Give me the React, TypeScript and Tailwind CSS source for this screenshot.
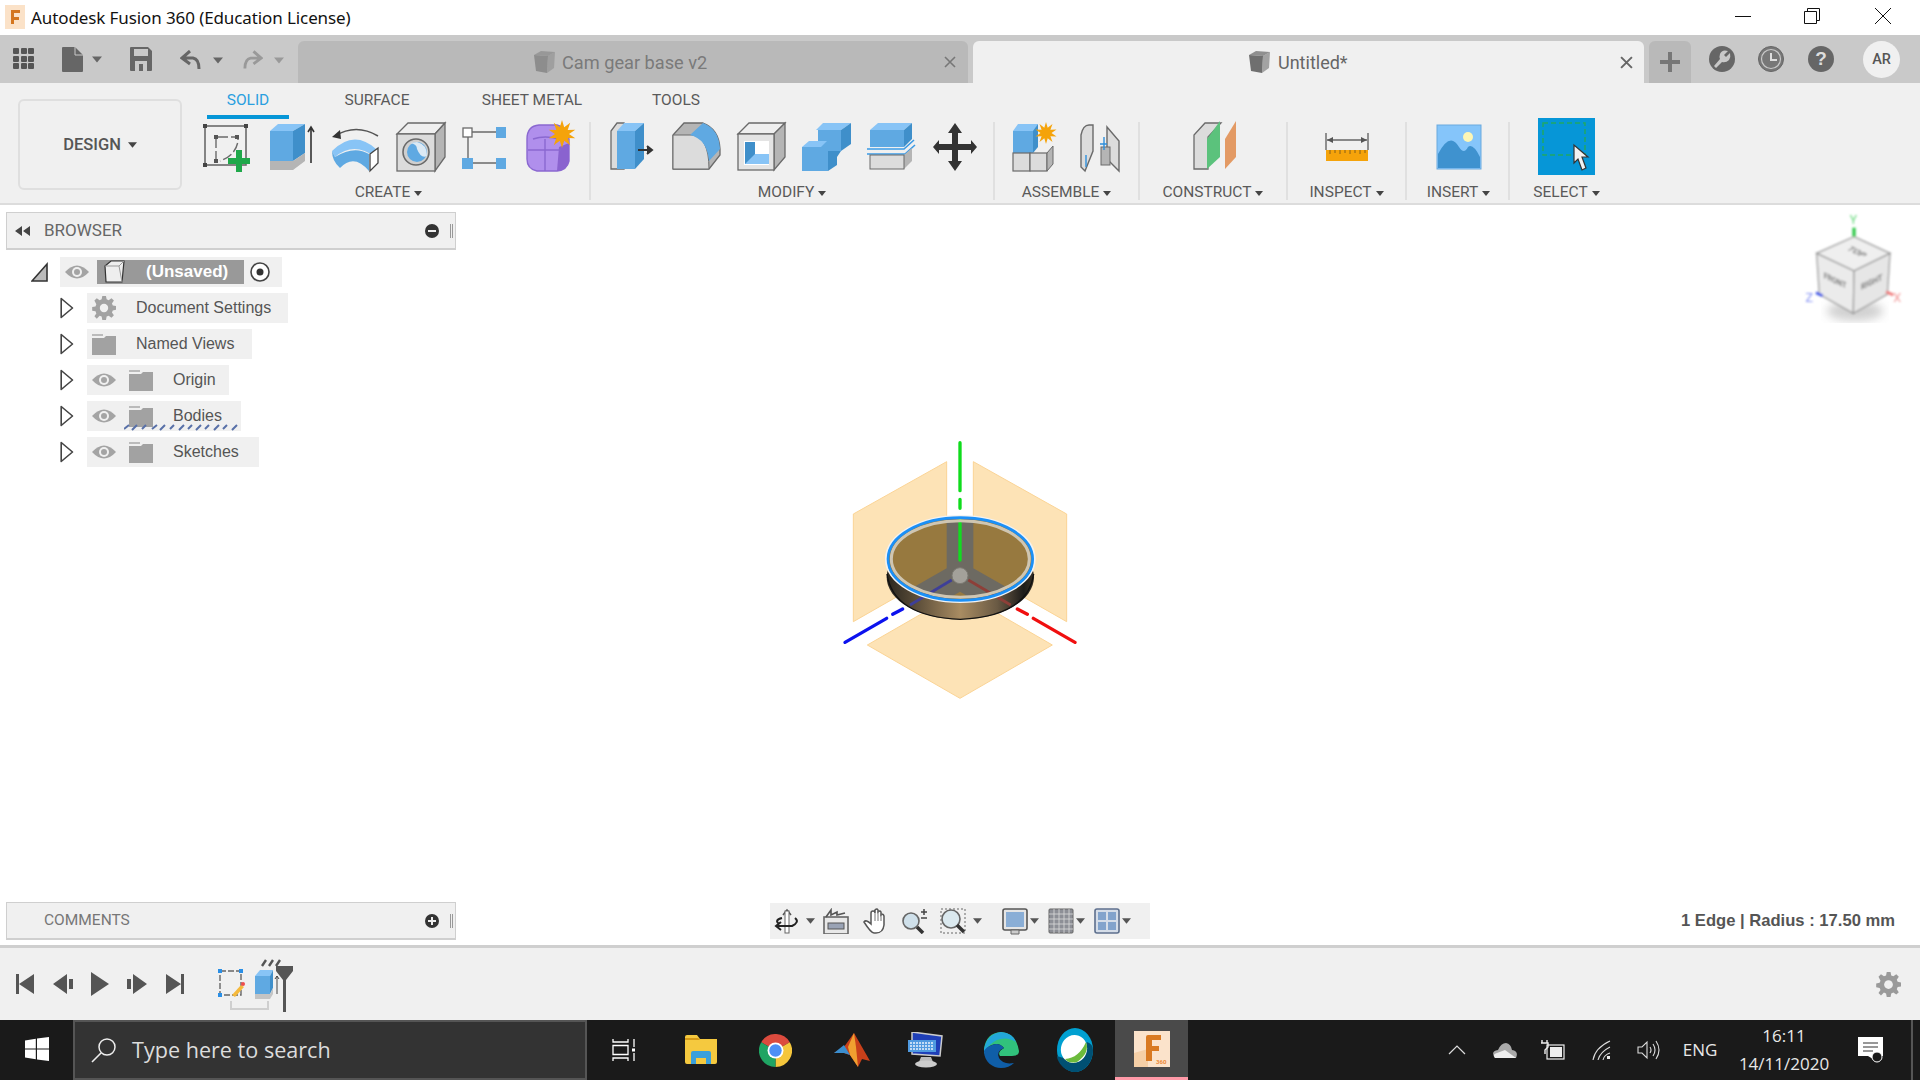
import React from "react";

const BL = "#5fa9e2";
const BD = "#3f8fca";
const BT = "#88c4f6";
const GY = "#dcdcdc";
const GD = "#b5b5b5";
const OL = "#6a6a6a";

function Caret({ c = "#555", w = 9, h = 6 }: { c?: string; w?: number; h?: number }) {
  return (
    <svg width={w} height={h} viewBox="0 0 10 6" className="shrink-0">
      <path d="M0 0H10L5 6Z" fill={c} />
    </svg>
  );
}

function I60({ children }: { children: React.ReactNode }) {
  return (
    <svg width={60} height={60} viewBox="0 0 60 60" className="shrink-0">
      {children}
    </svg>
  );
}

function Star({ x, y, r = 10 }: { x: number; y: number; r?: number }) {
  const pts: string[] = [];
  for (let i = 0; i < 20; i++) {
    const a = (i * Math.PI) / 10;
    const q = i % 2 === 0 ? r : r * 0.5;
    pts.push(`${(x + q * Math.sin(a)).toFixed(1)},${(y - q * Math.cos(a)).toFixed(1)}`);
  }
  return <polygon points={pts.join(" ")} fill="#f5a30a" />;
}

const IconSketch = () => (
  <I60>
    <rect x="9" y="9" width="41" height="39" fill="none" stroke={OL} strokeWidth="1.6" />
    {[[9, 9], [50, 9], [9, 48]].map(([x, y], i) => (
      <rect key={i} x={x - 2} y={y - 2} width="4" height="4" fill="#444" />
    ))}
    <path d="M20 44V20H42V24Q40 38 24 44" fill="none" stroke={OL} strokeWidth="1.4" strokeDasharray="10 3" />
    <rect x="18" y="18" width="4" height="4" fill="#555" />
    <rect x="18" y="42" width="4" height="4" fill="#555" />
    <rect x="39" y="18" width="4" height="4" fill="#555" />
    <path d="M40 33h6v8h8v6h-8v8h-6v-8h-8v-6h8z" fill="#1fa84a" />
  </I60>
);
const IconExtrude = () => (
  <I60>
    <polygon points="9,14 17,7 44,7 32,14" fill={BT} />
    <polygon points="9,14 32,14 32,44 9,44" fill={BL} />
    <polygon points="32,14 44,7 44,36 32,44" fill={BD} />
    <polygon points="9,44 32,44 44,36 44,44 32,53 9,53" fill={GD} />
    <path d="M50 46V11M47 15l3-5 3 5" stroke="#333" strokeWidth="1.6" fill="none" />
  </I60>
);
const IconRevolve = () => (
  <I60>
    <path d="M9 19Q30 6 52 19" fill="none" stroke="#555" strokeWidth="1.6" />
    <polygon points="6,20 14,13 15,22" fill="#333" />
    <path d="M6 34Q28 12 50 32L49 40Q28 24 9 40Z" fill={BT} />
    <path d="M6 34L9 40Q28 28 43 37V54Q28 36 14 51Q6 44 6 34Z" fill={BL} />
    <polygon points="44,37 52,31 52,46 44,54" fill="#fff" stroke="#444" strokeWidth="1.3" />
  </I60>
);
const IconHole = () => (
  <I60>
    <polygon points="6,17 17,6 54,6 44,17" fill="#efefef" stroke={OL} strokeWidth="1.3" />
    <polygon points="44,17 54,6 54,40 44,54" fill={GD} stroke={OL} strokeWidth="1.3" />
    <rect x="6" y="17" width="38" height="37" fill={GY} stroke={OL} strokeWidth="1.3" />
    <circle cx="25" cy="35" r="13" fill="#cfcfcf" stroke={OL} strokeWidth="1.6" />
    <circle cx="26" cy="35" r="10" fill={BL} />
    <path d="M19 26Q26 27 26 32Q30 42 36 39Q36 27 26 25Z" fill="#dbe9f4" />
  </I60>
);
const IconPattern = () => (
  <I60>
    <rect x="7" y="11" width="9" height="9" fill="#fff" stroke={OL} strokeWidth="1.3" />
    <rect x="40" y="10" width="10" height="11" fill={BL} />
    <rect x="6" y="41" width="11" height="11" fill={BL} />
    <rect x="40" y="41" width="10" height="11" fill={BL} />
    <path d="M16 15H40M12 20V41M17 46H40" stroke={OL} strokeWidth="1.4" />
  </I60>
);
const IconForm = () => (
  <I60>
    <path d="M6 22Q6 9 18 8H36Q46 10 48 22V44Q46 53 36 54H16Q6 52 6 42Z" fill="#b08fec" stroke="#8a68d0" strokeWidth="1.4" />
    <path d="M38 30L48 26V44Q46 53 36 54Z" fill="#8a63cf" />
    <path d="M7 33H40M24 22V54M12 22Q24 18 38 22" stroke="#8a68d0" strokeWidth="1.4" fill="none" />
    <Star x={41} y={17} r={14} />
  </I60>
);
const IconPress = () => (
  <I60>
    <polygon points="9,52 9,14 15,6 22,6 22,52" fill={GY} stroke={OL} strokeWidth="1.3" />
    <polygon points="15,14 22,6 42,6 33,14" fill={BT} />
    <rect x="15" y="14" width="18" height="38" fill={BL} />
    <polygon points="33,14 42,6 42,42 33,52" fill={BD} />
    <path d="M36 33H48M45 29l5 4-5 4" stroke="#333" strokeWidth="2" fill="#333" />
  </I60>
);
const IconFillet = () => (
  <I60>
    <path d="M6 52V18L17 6H36Q52 12 53 32V38L42 52Z" fill={GD} stroke={OL} strokeWidth="1.3" />
    <path d="M6 18H25Q42 20 42 52H6Z" fill={GY} stroke={OL} strokeWidth="1" />
    <path d="M23 18L36 6Q52 12 53 32L42 44Q40 22 23 18Z" fill={BL} />
  </I60>
);
const IconShell = () => (
  <I60>
    <polygon points="6,17 17,6 53,6 42,17" fill="#efefef" stroke={OL} strokeWidth="1.3" />
    <polygon points="42,17 53,6 53,40 42,53" fill={GD} stroke={OL} strokeWidth="1.3" />
    <rect x="6" y="17" width="36" height="36" fill="#e4e4e4" stroke={OL} strokeWidth="1.3" />
    <rect x="12" y="24" width="25" height="24" fill="#fff" />
    <rect x="13" y="25" width="10" height="22" fill={BD} />
    <polygon points="13,47 23,37 37,37 37,47" fill={BT} />
  </I60>
);
const IconCombine = () => (
  <I60>
    <polygon points="19,13 26,6 54,6 44,13" fill={BT} />
    <rect x="21" y="13" width="23" height="21" fill={BL} />
    <polygon points="44,13 54,6 54,27 44,34" fill={BD} />
    <polygon points="5,30 12,24 30,24 24,30" fill={BT} />
    <rect x="5" y="30" width="26" height="24" fill={BL} />
    <polygon points="31,34 44,34 40,40 40,48 31,54" fill={BD} />
  </I60>
);
const IconSplit = () => (
  <I60>
    <polygon points="8,13 16,6 50,6 42,13" fill={BT} />
    <rect x="8" y="13" width="34" height="17" fill={BL} />
    <polygon points="42,13 50,6 50,22 42,30" fill={BD} />
    <path d="M5 32H42L52 23M5 37H43L53 28" stroke="#3a9ae6" strokeWidth="1.6" fill="none" />
    <polygon points="8,38 42,38 50,31 50,44 42,52 8,52" fill={GD} />
    <rect x="8" y="38" width="34" height="14" fill={GY} stroke={OL} strokeWidth="1" />
  </I60>
);
const IconMove = () => (
  <I60>
    <path d="M28 6L35 16H31V27H44V23L50 30L44 37V33H31V44H35L28 54L21 44H25V33H12V37L6 30L12 23V27H25V16H21Z" fill="#333" />
  </I60>
);
const IconNewComp = () => (
  <I60>
    <polygon points="9,14 14,7 34,7 30,14" fill={BT} />
    <rect x="9" y="14" width="20" height="22" fill={BL} />
    <polygon points="29,14 34,7 34,30 29,36" fill={BD} />
    <rect x="9" y="36" width="17" height="18" fill={GY} stroke={OL} strokeWidth="1.2" />
    <rect x="26" y="36" width="17" height="18" fill={GY} stroke={OL} strokeWidth="1.2" />
    <polygon points="43,36 49,29 49,47 43,54" fill={GD} stroke={OL} strokeWidth="1" />
    <Star x={42} y={16} r={11} />
  </I60>
);
const IconJoint = () => (
  <I60>
    <path d="M12 50V18Q14 8 20 8H24V34L16 54Z" fill={GY} stroke={OL} strokeWidth="1.4" />
    <path d="M38 10L50 24V54L38 42Z" fill={GY} stroke={OL} strokeWidth="1.4" />
    <rect x="32" y="30" width="9" height="18" fill={GD} stroke={OL} />
    <path d="M35 20V33M31 27H38M17 38V50" stroke="#2e8fdc" strokeWidth="1.4" />
  </I60>
);
const IconConstruct = () => (
  <I60>
    <polygon points="11,52 11,18 22,6 38,6 25,20 25,52" fill={GY} stroke={OL} strokeWidth="1.3" />
    <polygon points="24,22 37,4 37,40 24,52" fill="#5bc27c" />
    <polygon points="42,22 53,4 53,40 42,52" fill="#e39a64" />
  </I60>
);
const IconInspect = () => (
  <I60>
    <path d="M9 16V33M51 16V33M10 23H50" stroke="#666" strokeWidth="1.4" />
    <path d="M10 23l6-3v6zM50 23l-6-3v6z" fill="#555" />
    <rect x="9" y="33" width="42" height="11" fill="#f5a30a" />
    <path d="M13 33v4M18 33v3M23 33v4M28 33v3M33 33v4M38 33v3M43 33v4M48 33v3" stroke="#876018" strokeWidth="1" />
  </I60>
);
const IconInsert = () => (
  <I60>
    <rect x="8" y="8" width="44" height="44" fill="#85c5fa" stroke="#6aa9de" />
    <circle cx="39" cy="20" r="5" fill="#fdf6b5" />
    <path d="M9 51V37Q21 14 30 30Q35 38 39 30Q44 26 51 40V51Z" fill="#3f92cf" />
  </I60>
);
const IconSelect = () => (
  <div className="relative w-[57px] h-[57px] bg-[#0696d7] shrink-0">
    <svg width={57} height={57} viewBox="0 0 57 57" className="absolute left-0 top-0">
      <rect x="5" y="5" width="42" height="32" fill="none" stroke="#21a866" strokeWidth="1.5" strokeDasharray="5 3" />
      <path d="M36 27L36 45L40 41L44 52L48 50L44 39H50Z" fill="#f2f2f2" stroke="#333" strokeWidth="1.2" />
    </svg>
  </div>
);

function Group({ w, label, children, pr = 0, pl = 0, last = false }: { w: string; label: string; children: React.ReactNode; pr?: number; pl?: number; last?: boolean }) {
  return (
    <div className={`${w} ${last ? "" : "border-r-2 border-[#e0e0e0]"} h-[78px] mt-[6px] flex flex-col items-center shrink-0`} style={{ paddingRight: pr, paddingLeft: pl }}>
      <div className="flex items-center h-[57px] -mt-[4px] justify-center">{children}</div>
      <div className="flex items-center gap-[4px] mt-[8px] h-[20px] text-[15.5px] text-[#5a5a5a]">
        <span>{label}</span>
        <Caret c="#444" w={8} h={5} />
      </div>
    </div>
  );
}

const Cell = ({ children }: { children: React.ReactNode }) => (
  <div className="w-[65px] flex justify-center shrink-0">{children}</div>
);

const Cube = ({ c = "#888" }: { c?: string }) => (
  <svg width={24} height={24} viewBox="0 0 24 24" className="shrink-0">
    <polygon points="2,5 9,1 23,2 16,6" fill={c} opacity=".75" />
    <polygon points="2,5 16,6 15,23 4,21" fill={c} />
    <polygon points="16,6 23,2 22,18 15,23" fill={c} opacity=".6" />
  </svg>
);

function TitleBar() {
  return (
    <div className="h-[35px] bg-white flex items-center relative shrink-0">
      <svg width={20} height={24} viewBox="0 0 20 24" className="ml-[5px] -mt-[2px] shrink-0">
        <rect width="20" height="24" fill="#fbe2c8" />
        <path d="M6 5H15V8H9V12H14V15H9V19H6Z" fill="#d4761f" />
      </svg>
      <span className="ml-[6px] text-[17px] text-[#111] font-['Noto_Sans',sans-serif] tracking-[-0.1px]">Autodesk Fusion 360 (Education License)</span>
      <div className="ml-auto flex items-center mr-[29px] -mt-[3px]">
        <svg width={16} height={16} viewBox="0 0 16 16"><path d="M0 8.5H16" stroke="#111" /></svg>
        <svg width={16} height={16} viewBox="0 0 16 16" className="ml-[53px]">
          <path d="M.5 3.5H12.5V15.5H.5ZM3.5 3V.5H15.5V12.5H13" fill="none" stroke="#111" />
        </svg>
        <svg width={16} height={16} viewBox="0 0 16 16" className="ml-[55px]">
          <path d="M0 0L16 16M16 0L0 16" stroke="#111" />
        </svg>
      </div>
    </div>
  );
}

function TabBar() {
  return (
    <div className="h-[48px] bg-[#c9c9c9] flex items-end relative shrink-0">
      <div className="absolute left-[13px] top-[13px] grid grid-cols-3 gap-[1.5px]">
        {Array.from({ length: 9 }).map((_, i) => (
          <div key={i} className="w-[6px] h-[6px] bg-[#555] rounded-[1px]" />
        ))}
      </div>
      <div className="absolute left-[62px] top-[12px] flex items-center gap-[9px]">
        <svg width={21} height={25} viewBox="0 0 21 25"><path d="M1 0H13L21 8V24Q21 25 20 25H1Q0 25 0 24V1Q0 0 1 0Z" fill="#666" /><path d="M13 0V8H21" fill="none" stroke="#c9c9c9" /></svg>
        <Caret c="#666" w={10} h={7} />
      </div>
      <svg width={22} height={24} viewBox="0 0 22 24" className="absolute left-[130px] top-[12px]">
        <path d="M1 0H18L22 4V23Q22 24 21 24H1Q0 24 0 23V1Q0 0 1 0Z" fill="#666" />
        <rect x="4" y="2" width="14" height="7" fill="#c9c9c9" />
        <rect x="5" y="14" width="12" height="10" fill="#c9c9c9" />
        <rect x="9" y="17" width="4" height="7" fill="#666" />
      </svg>
      <div className="absolute left-[180px] top-[15px] flex items-center gap-[12px]">
        <svg width={21} height={20} viewBox="0 0 21 20"><path d="M10 1L2 8L10 14M3 8H13Q19 9 19 19" fill="none" stroke="#666" strokeWidth="3" /></svg>
        <Caret c="#666" w={10} h={7} />
      </div>
      <div className="absolute left-[243px] top-[15px] flex items-center gap-[11px]">
        <svg width={20} height={20} viewBox="0 0 21 20"><path d="M11 1L19 8L11 14M18 8H8Q2 9 2 19" fill="none" stroke="#999" strokeWidth="3" /></svg>
        <Caret c="#999" w={10} h={7} />
      </div>

      <div className="ml-[298px] w-[670px] h-[42px] bg-[#b9b9b9] rounded-t-[6px] flex items-center pl-[234px] pr-[12px] text-[#7a7a7a] text-[18.2px] font-['Roboto',sans-serif]">
        <Cube c="#8d8d8d" />
        <span className="ml-[6px] mt-[2px]">Cam gear base v2</span>
        <svg width={12} height={12} viewBox="0 0 12 12" className="ml-auto"><path d="M1 1L11 11M11 1L1 11" stroke="#777" strokeWidth="1.6" /></svg>
      </div>
      <div className="ml-[5px] w-[671px] h-[42px] bg-[#f0f0f0] rounded-t-[6px] flex items-center pl-[274px] pr-[11px] text-[#666] text-[18px] font-['Roboto',sans-serif]">
        <Cube c="#6f6f6f" />
        <span className="ml-[7px]">Untitled*</span>
        <svg width={13} height={13} viewBox="0 0 12 12" className="ml-auto"><path d="M1 1L11 11M11 1L1 11" stroke="#666" strokeWidth="1.8" /></svg>
      </div>
      <div className="ml-[5px] w-[42px] h-[42px] bg-[#b9b9b9] rounded-t-[6px] flex items-center justify-center">
        <svg width={20} height={20} viewBox="0 0 20 20"><path d="M8 0h4v8h8v4h-8v8H8v-8H0V8h8z" fill="#777" /></svg>
      </div>
      <div className="absolute left-[1709px] top-[11px]">
        <svg width={26} height={26} viewBox="0 0 26 26">
          <circle cx="13" cy="13" r="13" fill="#666" />
          <path d="M21 7L17 11L15 9L19 5Q13 3 11 8Q10 11 11 13L5 20L7 22L13 16Q17 17 20 14Q22 11 21 7Z" fill="#c9c9c9" />
        </svg>
      </div>
      <div className="absolute left-[1758px] top-[11px]">
        <svg width={26} height={26} viewBox="0 0 26 26">
          <circle cx="13" cy="13" r="12.5" fill="#777" stroke="#666" />
          <circle cx="13" cy="13" r="9.5" fill="#777" stroke="#c9c9c9" strokeWidth="1.2" />
          <path d="M13 7V14H19" fill="none" stroke="#ddd" strokeWidth="2" />
        </svg>
      </div>
      <div className="absolute left-[1808px] top-[11px] w-[26px] h-[26px] rounded-full bg-[#666] flex items-center justify-center text-[#ddd] font-bold text-[19px] font-['Liberation_Sans',sans-serif]">?</div>
      <div className="absolute left-[1863px] top-[6px] w-[37px] h-[37px] rounded-full bg-[#f0f0f0] flex items-center justify-center text-[#555] text-[14.5px] font-['Roboto',sans-serif] font-medium">AR</div>
    </div>
  );
}

function Ribbon() {
  return (
    <div className="h-[122px] bg-[#f0f0f0] border-b-2 border-[#dcdcdc] flex shrink-0 font-['Roboto',sans-serif]">
      <div className="ml-[18px] mt-[16px] w-[164px] h-[91px] border-2 border-[#dfdfdf] rounded-[6px] flex items-center justify-center gap-[7px] text-[#555] text-[16.5px] font-medium shrink-0">
        <span className="mt-[1px]">DESIGN</span>
        <Caret c="#444" />
      </div>
      <div className="flex flex-col">
        <div className="h-[32px] flex text-[15.5px] text-[#5a5a5a] shrink-0 ml-[25px]">
          <div className="w-[82px] flex flex-col items-center justify-end text-[#2a9fdf] relative">
            <span className="mb-[3px]">SOLID</span>
            <div className="absolute left-0 top-[32px] w-[82px] h-[4px] bg-[#0696d7]" />
          </div>
          <div className="ml-[38px] w-[100px] flex items-end justify-center"><span className="mb-[3px]">SURFACE</span></div>
          <div className="ml-[45px] w-[120px] flex items-end justify-center"><span className="mb-[3px]">SHEET METAL</span></div>
          <div className="ml-[54px] w-[60px] flex items-end justify-center"><span className="mb-[3px]">TOOLS</span></div>
        </div>
        <div className="flex ml-[14px] mt-[1px]">
          <Group w="w-[395px]" label="CREATE" pr={8}>
            <Cell><IconSketch /></Cell><Cell><IconExtrude /></Cell><Cell><IconRevolve /></Cell><Cell><IconHole /></Cell><Cell><IconPattern /></Cell><Cell><IconForm /></Cell>
          </Group>
          <Group w="w-[404px]" label="MODIFY">
            <div className="flex pl-[4px]"><Cell><IconPress /></Cell><Cell><IconFillet /></Cell><Cell><IconShell /></Cell><Cell><IconCombine /></Cell><Cell><IconSplit /></Cell><Cell><IconMove /></Cell></div>
          </Group>
          <Group w="w-[145px]" label="ASSEMBLE">
            <Cell><IconNewComp /></Cell><Cell><IconJoint /></Cell>
          </Group>
          <Group w="w-[148px]" label="CONSTRUCT">
            <IconConstruct />
          </Group>
          <Group w="w-[119px]" label="INSPECT">
            <IconInspect />
          </Group>
          <Group w="w-[103px]" label="INSERT" pl={2}>
            <IconInsert />
          </Group>
          <Group w="w-[112px]" label="SELECT" last pl={1}>
            <IconSelect />
          </Group>
        </div>
      </div>
    </div>
  );
}

const Eye = () => (
  <svg width={24} height={16} viewBox="0 0 24 16" className="shrink-0">
    <path d="M0 8Q12 -5 24 8Q12 21 0 8Z" fill="#a4a4a4" />
    <circle cx="12" cy="8" r="5" fill="#f0f0f0" />
    <circle cx="12" cy="8" r="3" fill="#a4a4a4" />
  </svg>
);
const Folder = () => (
  <svg width={24} height={21} viewBox="0 0 24 21" className="shrink-0">
    <path d="M0 0H11V2H0Z" fill="#bbb" />
    <path d="M0 4H12L14 2H24V21H0Z" fill="#a2a2a2" />
  </svg>
);
const Gear = ({ s = 24, c = "#a2a2a2" }: { s?: number; c?: string }) => (
  <svg width={s} height={s} viewBox="0 0 24 24" className="shrink-0">
    <path
      d="M10 0h4l.7 3.6 2.2.9L20 2.4 22.6 5l-2.1 3.1.9 2.2 3.6.7v4l-3.6.7-.9 2.2 2.1 3.1-2.6 2.6-3.1-2.1-2.2.9-.7 3.6h-4l-.7-3.6-2.2-.9L4 24.6 1.4 22l2.1-3.1-.9-2.2L-1 16v-4l3.6-.7.9-2.2L1.4 5 4 2.4l3.1 2.1 2.2-.9z"
      fill={c}
      transform="translate(1.1 0) scale(.92)"
    />
    <circle cx="12" cy="12" r="4.2" fill="#f0f0f0" />
  </svg>
);
const Tri = () => (
  <svg width={14} height={22} viewBox="0 0 14 22" className="shrink-0">
    <path d="M1.2 1.5L12.5 11L1.2 20.5Z" fill="#fff" stroke="#444" strokeWidth="1.6" strokeLinejoin="round" />
  </svg>
);

function TreeRow({ w, eye, gear, label, wavy }: { w: string; eye?: boolean; gear?: boolean; label: string; wavy?: boolean }) {
  return (
    <div className="flex items-center h-[30px] ml-[60px]">
      <Tri />
      <div className={`ml-[13px] ${w} h-[30px] bg-[#f0f0f0] flex items-center pl-[5px] relative`}>
        {eye && <Eye />}
        {gear ? <Gear /> : <div className={eye ? "ml-[13px]" : ""}><Folder /></div>}
        <span className="ml-[20px] text-[#555]">{label}</span>
        {wavy && (
          <svg width={116} height={8} viewBox="0 0 116 8" className="absolute left-[37px] top-[22px]">
            <path d="M0 6L5 2M8 7L13 2M18 6L22 2M28 6L33 2M36 7L41 2M46 6L50 2M55 7L60 2M64 6L68 2M72 7L77 2M81 6L85 2M90 7L95 2M99 6L103 2M108 7L113 2" stroke="#5870a8" strokeWidth="2" />
          </svg>
        )}
      </div>
    </div>
  );
}

function Browser() {
  return (
    <div>
      <div className="ml-[6px] w-[450px] h-[38px] bg-[#f0f0f0] border border-[#cfcfcf] border-b-2 flex items-center pl-[8px] pr-[2px]">
        <svg width={15} height={10} viewBox="0 0 15 10"><path d="M7 0V10L0 5ZM15 0V10L8 5Z" fill="#444" /></svg>
        <span className="ml-[14px] text-[#666] text-[17px] font-['Roboto',sans-serif]">BROWSER</span>
        <svg width={14} height={14} viewBox="0 0 14 14" className="ml-auto"><circle cx="7" cy="7" r="7" fill="#333" /><rect x="3" y="6" width="8" height="2" fill="#eee" /></svg>
        <div className="ml-[11px] w-[3px] h-[14px] border-x border-[#999]" />
      </div>
      <div className="mt-[7px] flex flex-col gap-[6px] text-[16px] font-['Liberation_Sans',sans-serif]">
        <div className="flex items-center h-[30px] ml-[31px]">
          <svg width={18} height={22} viewBox="0 0 18 22"><path d="M1 20L16 3V20Z" fill="#bbb" stroke="#333" strokeWidth="1.6" /></svg>
          <div className="ml-[11px] w-[222px] h-[30px] bg-[#f0f0f0] flex items-center pl-[5px]">
            <Eye />
            <div className="ml-[8px] w-[147px] h-[24px] bg-[#999] flex items-center relative">
              <svg width={24} height={24} viewBox="0 0 24 24" className="ml-[5px]">
                <path d="M3 6L9 1H22L20 22H4Z" fill="#eee" stroke="#333" strokeWidth="1.2" />
                <path d="M3 6H17L20 22M17 6L22 1" fill="none" stroke="#999" strokeWidth="1" />
              </svg>
              <span className="ml-[20px] text-white font-bold text-[17px]">(Unsaved)</span>
            </div>
            <svg width={20} height={20} viewBox="0 0 20 20" className="ml-[6px]"><circle cx="10" cy="10" r="9" fill="#fff" stroke="#444" strokeWidth="1.6" /><circle cx="10" cy="10" r="3.5" fill="#333" /></svg>
          </div>
        </div>
        <TreeRow w="w-[201px]" gear label="Document Settings" />
        <TreeRow w="w-[165px]" label="Named Views" />
        <TreeRow w="w-[142px]" eye label="Origin" />
        <TreeRow w="w-[154px]" eye label="Bodies" wavy />
        <TreeRow w="w-[172px]" eye label="Sketches" />
      </div>
    </div>
  );
}

function Model() {
  const wallL = "380,95 100,252 100,575 380,415";
  const wallR = "460,95 740,252 740,575 460,415";
  const floor = "142,645 420,805 697,645 420,485";
  return (
    <svg width={280} height={280} viewBox="0 0 840 840" className="absolute left-[820px] top-[225px]">
      <defs>
        <linearGradient id="band" x1="0" x2="1" y1="0" y2="0">
          <stop offset="0" stopColor="#2a261e" />
          <stop offset=".2" stopColor="#5b4d39" />
          <stop offset=".5" stopColor="#a98c62" />
          <stop offset=".75" stopColor="#6a5a44" />
          <stop offset=".93" stopColor="#1d1c1a" />
          <stop offset="1" stopColor="#3a3226" />
        </linearGradient>
        <clipPath id="top"><ellipse cx="421" cy="387" rx="216" ry="124" /></clipPath>
      </defs>
      <g fill="#fde3b6" stroke="#fbd495" strokeWidth="3">
        <polygon points={wallL} />
        <polygon points={wallR} />
        <polygon points={floor} />
      </g>
      <path d="M75 637L200 565M218 553L248 537" stroke="#0c12ee" strokeWidth="10" strokeLinecap="round" />
      <path d="M765 637L640 565M622 553L592 537" stroke="#f00f0f" strokeWidth="10" strokeLinecap="round" />
      <path d="M420 38V182M420 208V235" stroke="#0fdc1c" strokeWidth="10" strokeLinecap="round" />
      <ellipse cx="421" cy="442" rx="221" ry="126" fill="url(#band)" />
      <path d="M201 432Q220 560 421 568Q622 560 641 432" fill="none" stroke="#111" strokeWidth="4" />
      <ellipse cx="421" cy="387" rx="216" ry="124" fill="#6d6a62" />
      <g clipPath="url(#top)" fill="#97793f">
        <polygon points={wallL} />
        <polygon points={wallR} />
        <polygon points={floor} />
      </g>
      <path d="M270 525L395 450" stroke="#3e3f98" strokeWidth="8" />
      <path d="M572 525L445 450" stroke="#8d3f38" strokeWidth="8" />
      <path d="M420 270V390" stroke="#12dc20" strokeWidth="10" strokeLinecap="round" />
      <circle cx="420" cy="437" r="24" fill="#a3a19a" stroke="#7c7a72" strokeWidth="3" />
      <ellipse cx="421" cy="387" rx="223" ry="129" fill="none" stroke="#f2f2f2" strokeWidth="6" />
      <ellipse cx="421" cy="387" rx="207" ry="115" fill="none" stroke="#cfc6b2" strokeWidth="9" />
      <ellipse cx="421" cy="387" rx="217" ry="124" fill="none" stroke="#1a90f8" strokeWidth="8" />
    </svg>
  );
}

function ViewCube() {
  return (
    <svg width={140} height={130} viewBox="0 0 420 390" className="absolute left-[1780px] top-0">
      <defs>
        <filter id="b1"><feGaussianBlur stdDeviation="2.4" /></filter>
        <filter id="b2"><feGaussianBlur stdDeviation="14" /></filter>
      </defs>
      <ellipse cx="225" cy="318" rx="85" ry="30" fill="#999" opacity=".45" filter="url(#b2)" />
      <g filter="url(#b1)">
        <polygon points="222,95 330,145 222,198 110,145" fill="#efefef" stroke="#9c9c9c" strokeWidth="4" />
        <polygon points="110,145 222,198 220,325 118,268" fill="#ebebeb" stroke="#9c9c9c" strokeWidth="4" />
        <polygon points="330,145 222,198 220,325 322,268" fill="#e6e6e6" stroke="#9c9c9c" strokeWidth="4" />
        <path d="M222 95V68" stroke="#2fc94a" strokeWidth="10" />
        <path d="M108 263L128 272" stroke="#3c55e8" strokeWidth="8" />
        <path d="M318 260L340 270" stroke="#ef7a7a" strokeWidth="8" />
        <text x="220" y="58" textAnchor="middle" fontSize="36" fill="#64d87a" fontFamily="Roboto, sans-serif">Y</text>
        <text x="88" y="292" textAnchor="middle" fontSize="38" fill="#8a97f5" fontFamily="Roboto, sans-serif">Z</text>
        <text x="352" y="292" textAnchor="middle" fontSize="38" fill="#f29a9a" fontFamily="Roboto, sans-serif">X</text>
        <text textAnchor="middle" fontSize="30" fill="#777" fontFamily="Roboto, sans-serif" fontWeight="700" transform="matrix(.85 .42 -.85 .42 222 145)">TOP</text>
        <text textAnchor="middle" fontSize="25" fill="#777" fontFamily="Roboto, sans-serif" fontWeight="700" transform="matrix(.85 .4 0 1 165 235)">FRONT</text>
        <text textAnchor="middle" fontSize="26" fill="#777" fontFamily="Roboto, sans-serif" fontWeight="700" transform="matrix(.85 -.4 0 1 275 240)">RIGHT</text>
      </g>
    </svg>
  );
}

function NavBar() {
  const s = { fill: "none", stroke: "#555", strokeWidth: 1.6 };
  return (
    <div className="w-[380px] h-[36px] bg-[#f0f0f0] flex items-center relative shrink-0">
      <svg width={26} height={26} viewBox="0 0 26 26" className="absolute left-[4px] top-[5px]">
        <path d="M13 25V3M9 7l4-5 4 5" {...s} />
        <rect x="11" y="3" width="4" height="22" fill="#fff" stroke="#666" />
        <path d="M5 16Q0 12 8 10M21 10Q26 14 18 18H3M7 14L2 18L7 22" fill="none" stroke="#222" strokeWidth="2" />
      </svg>
      <div className="absolute left-[36px] top-[15px]"><Caret /></div>
      <svg width={26} height={26} viewBox="0 0 26 26" className="absolute left-[53px] top-[5px]">
        <rect x="1" y="9" width="24" height="17" fill="#e8e8e8" stroke="#666" strokeWidth="1.6" />
        <rect x="5" y="15" width="16" height="6" fill="#9aa3b5" stroke="#555" />
        <path d="M3 9L8 2V7L14 4V7L22 5" {...s} />
      </svg>
      <svg width={26} height={26} viewBox="0 0 26 26" className="absolute left-[93px] top-[5px]">
        <path d="M8 16V5Q8 3 10 3T12 5V2Q14 0 15 2V4Q17 2 18 4V7Q20 5 21 8V17Q20 25 13 25H11Q8 25 1 14Q3 11 8 16Z" fill="#fff" stroke="#555" strokeWidth="1.5" />
        <path d="M12 5V13M15 3V13M18 6V13" stroke="#777" />
      </svg>
      <svg width={26} height={26} viewBox="0 0 26 26" className="absolute left-[131px] top-[5px]">
        <circle cx="10" cy="13" r="8" fill="#cfe0ea" stroke="#666" strokeWidth="1.6" />
        <path d="M16 19L22 25" stroke="#333" strokeWidth="3.5" />
        <path d="M20 4H26M23 1V7M20 10H26" stroke="#444" strokeWidth="1.5" />
      </svg>
      <svg width={26} height={26} viewBox="0 0 26 26" className="absolute left-[170px] top-[5px]">
        <rect x="1" y="1" width="24" height="24" fill="none" stroke="#666" strokeDasharray="2 2" />
        <circle cx="11" cy="11" r="9" fill="#dbe9ef" stroke="#666" strokeWidth="1.6" />
        <path d="M17 17L24 24" stroke="#333" strokeWidth="3.5" />
      </svg>
      <div className="absolute left-[203px] top-[15px]"><Caret /></div>
      <svg width={26} height={30} viewBox="0 0 26 30" className="absolute left-[232px] top-[5px]">
        <rect x="1" y="1" width="24" height="21" rx="2" fill="#e5e5e5" stroke="#555" strokeWidth="1.6" />
        <rect x="4" y="4" width="18" height="15" fill="#8aaed6" />
        <path d="M9 22H17V26H9Z" fill="#ccc" stroke="#666" />
      </svg>
      <div className="absolute left-[260px] top-[15px]"><Caret /></div>
      <svg width={26} height={26} viewBox="0 0 26 26" className="absolute left-[278px] top-[5px]">
        <rect x="1" y="1" width="24" height="24" rx="1" fill="#8d8f96" stroke="#666" />
        <path d="M6 1V25M11 1V25M16 1V25M21 1V25M1 6H25M1 11H25M1 16H25M1 21H25" stroke="#dcdcdc" strokeWidth=".8" />
      </svg>
      <div className="absolute left-[306px] top-[15px]"><Caret /></div>
      <svg width={26} height={26} viewBox="0 0 26 26" className="absolute left-[324px] top-[5px]">
        <rect x="1" y="1" width="24" height="24" rx="2" fill="#d5dde8" stroke="#5d6f8d" strokeWidth="1.6" />
        <rect x="4" y="4" width="8" height="8" fill="#82a3cc" />
        <rect x="14" y="4" width="8" height="8" fill="#82a3cc" />
        <rect x="4" y="14" width="8" height="8" fill="#82a3cc" />
        <rect x="14" y="14" width="8" height="8" fill="#82a3cc" />
      </svg>
      <div className="absolute left-[352px] top-[15px]"><Caret /></div>
    </div>
  );
}

function Canvas() {
  return (
    <div className="flex-1 relative bg-white flex flex-col justify-between pt-[7px] pb-[5px] min-h-0">
      <Browser />
      <Model />
      <ViewCube />
      <div className="flex items-center">
        <div className="ml-[6px] w-[450px] h-[38px] bg-[#f0f0f0] border border-[#cfcfcf] border-b-2 flex items-center pl-[37px] pr-[2px] shrink-0">
          <span className="text-[#777] text-[15.5px] font-['Roboto',sans-serif]">COMMENTS</span>
          <svg width={14} height={14} viewBox="0 0 14 14" className="ml-auto"><circle cx="7" cy="7" r="7" fill="#333" /><path d="M3 7H11M7 3V11" stroke="#eee" strokeWidth="2" /></svg>
          <div className="ml-[11px] w-[3px] h-[14px] border-x border-[#999]" />
        </div>
        <div className="ml-[314px]"><NavBar /></div>
        <div className="ml-auto mr-[25px] text-[16.6px] font-bold text-[#555] font-['Liberation_Sans',sans-serif]">1 Edge | Radius : 17.50 mm</div>
      </div>
    </div>
  );
}

function Timeline() {
  const c = "#555";
  return (
    <div className="h-[75px] bg-[#f0f0f0] border-t-[3px] border-[#cfcfcf] flex items-center relative shrink-0">
      <svg width={18} height={20} viewBox="0 0 18 20" className="ml-[16px]"><path d="M0 0H3V20H0ZM18 0V20L3 10Z" fill={c} /></svg>
      <svg width={20} height={20} viewBox="0 0 20 20" className="ml-[19px]"><path d="M14 0V20L0 10ZM16 5H20V15H16Z" fill={c} /></svg>
      <svg width={18} height={24} viewBox="0 0 18 24" className="ml-[18px]"><path d="M0 0L18 12L0 24Z" fill={c} /></svg>
      <svg width={20} height={20} viewBox="0 0 20 20" className="ml-[18px]"><path d="M6 0V20L20 10ZM0 5H4V15H0Z" fill={c} /></svg>
      <svg width={18} height={20} viewBox="0 0 18 20" className="ml-[19px]"><path d="M15 0H18V20H15ZM0 0V20L15 10Z" fill={c} /></svg>
      <svg width={84} height={58} viewBox="0 0 84 58" className="absolute left-[215px] top-[6px]">
        <path d="M47 12L51 6M54 12L58 6M61 12L65 6" stroke="#555" strokeWidth="2.4" />
        <rect x="5" y="17" width="21" height="24" fill="none" stroke="#666" strokeDasharray="6 2" strokeWidth="1.4" />
        <rect x="3" y="15" width="4" height="4" fill="#2a8fe6" />
        <rect x="24" y="15" width="4" height="4" fill="#2a8fe6" />
        <rect x="3" y="39" width="4" height="4" fill="#2a8fe6" />
        <path d="M17 41L26 31L29 33L20 43Z" fill="#f5b93c" />
        <circle cx="28" cy="30" r="2" fill="#ee4d4d" />
        <polygon points="40,22 45,16 58,16 55,22" fill={BT} />
        <rect x="40" y="22" width="15" height="18" fill={BL} />
        <polygon points="55,22 58,16 58,34 55,40" fill={BD} />
        <path d="M40 40H55L58 34V40L55 45H40Z" fill="#c4c4c4" />
        <path d="M62 40V22M60 25l2-3 2 3" stroke="#444" fill="none" />
        <path d="M16 47V55H53V47" fill="none" stroke="#cfcfcf" strokeWidth="2" />
        <path d="M61 12H78V17L71 26V58H68V26L61 17Z" fill="#555" />
      </svg>
      <div className="ml-auto mr-[19px]"><Gear s={25} c="#9a9a9a" /></div>
    </div>
  );
}

const TaskCell = ({ x, children }: { x: string; children: React.ReactNode }) => (
  <div className={`${x} flex justify-center items-center shrink-0`}>{children}</div>
);

function Taskbar() {
  return (
    <div className="h-[60px] bg-[#1a1a1a] flex items-center relative shrink-0 font-['Open_Sans',sans-serif]">
      <div className="w-[73px] flex justify-center -mt-[2px] shrink-0">
        <svg width={24} height={24} viewBox="0 0 24 24"><path d="M0 3.4L10.8 1.8V11.4H0ZM12 1.6L24 0V11.4H12ZM0 12.6H10.8V22.2L0 20.6ZM12 12.6H24V24L12 22.4Z" fill="#fff" /></svg>
      </div>
      <div className="w-[514px] h-[60px] bg-[#333] border-x-2 border-t-2 border-b-2 border-[#555] flex items-center pl-[16px] shrink-0">
        <svg width={26} height={26} viewBox="0 0 26 26"><circle cx="16" cy="10" r="8" fill="none" stroke="#eee" strokeWidth="1.5" /><path d="M10 16L1 25" stroke="#eee" strokeWidth="1.6" /></svg>
        <span className="ml-[15px] text-[#dcdcdc] text-[21.6px]">Type here to search</span>
      </div>
      <TaskCell x="ml-[25px] w-[24px]">
        <svg width={24} height={24} viewBox="0 0 24 24"><path d="M1 1V4H16V1M1 23V20H16V23M1 7.5H16V16.5H1ZM22 1V9M22 15V23" fill="none" stroke="#fff" strokeWidth="1.3" /><rect x="20" y="10.5" width="3" height="3" fill="#fff" /></svg>
      </TaskCell>
      <TaskCell x="ml-[48px] w-[34px]">
        <svg width={34} height={30} viewBox="0 0 34 30">
          <path d="M1 2Q1 0 3 0H13L16 4H33V27Q33 29 31 29H3Q1 29 1 27Z" fill="#f5c93f" />
          <path d="M1 3H14L16 5H1Z" fill="#d69a16" />
          <path d="M7 29V18Q7 16 9 16H25Q27 16 27 18V29H22V23H12V29Z" fill="#3aa0dc" />
        </svg>
      </TaskCell>
      <TaskCell x="ml-[41px] w-[33px]">
        <svg width={33} height={33} viewBox="0 0 33 33">
          <path d="M16.5 16.5L2.2 8.25A16.5 16.5 0 0 1 30.8 8.25Z" fill="#dc4b3e" />
          <path d="M16.5 16.5L30.8 8.25A16.5 16.5 0 0 1 16.5 33Z" fill="#f5c63c" />
          <path d="M16.5 16.5L16.5 33A16.5 16.5 0 0 1 2.2 8.25Z" fill="#1fa463" />
          <circle cx="16.5" cy="16.5" r="8" fill="#fff" />
          <circle cx="16.5" cy="16.5" r="6.2" fill="#4d8ff5" />
        </svg>
      </TaskCell>
      <TaskCell x="ml-[42px] w-[36px]">
        <svg width={36} height={34} viewBox="0 0 36 34">
          <path d="M0 20L10 14L20 0L28 14L36 28L28 26L24 34L16 22L10 20Z" fill="#c8401a" />
          <path d="M20 0L14 14L16 22L24 34L22 14Z" fill="#f0a030" />
          <path d="M0 20L10 12L16 22L10 20Z" fill="#3a8ed0" />
        </svg>
      </TaskCell>
      <TaskCell x="ml-[37px] w-[36px]">
        <svg width={36} height={36} viewBox="0 0 36 36">
          <polygon points="5,0 35,4 33,24 5,22" fill="#1f3fb8" stroke="#ccc" strokeWidth="1.5" />
          <rect x="1" y="8" width="28" height="12" fill="#4f9ae0" />
          <path d="M3 11H27M3 14H27M3 17H27" stroke="#e8f2fb" strokeWidth="1.4" strokeDasharray="2 1" />
          <path d="M14 25H24L26 30H12Z" fill="#bbb" />
          <ellipse cx="19" cy="32" rx="11" ry="3.5" fill="#ccc" />
        </svg>
      </TaskCell>
      <TaskCell x="ml-[40px] w-[36px]">
        <svg width={36} height={36} viewBox="0 0 36 36">
          <path d="M1 17Q3 1 18 0Q33 1 36 19Q36 24 29 24H17Q14 20 21 16Q16 10 9 13Q3 15 1 22Z" fill="#31c27c" />
          <path d="M1 17Q4 2 18 0Q30 1 33 10Q24 4 14 8Q5 12 1 22Z" fill="#23a7d8" />
          <path d="M1 19C1 30 10 36 18 36Q26 36 31 31Q20 33 16 26Q13 19 21 16Q16 10 9 13Q3 15 1 19Z" fill="#0f5ea8" />
        </svg>
      </TaskCell>
      <TaskCell x="ml-[38px] w-[36px]">
        <svg width={36} height={44} viewBox="0 0 36 44">
          <ellipse cx="18" cy="22" rx="18" ry="22" fill="#00a0d1" />
          <path d="M36 22C36 34 28 44 18 44C8 44 0 34 0 28Q18 36 30 14Q36 16 36 22Z" fill="#005073" />
          <ellipse cx="17" cy="21" rx="13" ry="14" fill="#fff" transform="rotate(20 17 21)" />
          <path d="M29 14Q33 25 20 34Q12 36 8 31Q22 30 29 14Z" fill="#6cbb3c" />
        </svg>
      </TaskCell>
      <div className="ml-[22px] w-[73px] h-[60px] bg-[#4a4a4a] border-b-[3px] border-[#ff9aa8] flex items-center justify-center shrink-0">
        <svg width={36} height={36} viewBox="0 0 36 36">
          <rect width="36" height="36" fill="#fbe3cb" />
          <path d="M0 22L14 18V36H0Z" fill="#f5cfa6" />
          <path d="M12 6Q12 4 14 4H27V9H18V15H25V20H18V30H12Z" fill="#d97a22" />
          <text x="22" y="33" fontSize="6" fontWeight="700" fill="#ed8a38" fontFamily="Roboto, sans-serif">360</text>
        </svg>
      </div>
      <div className="ml-auto flex items-center text-[#e8e8e8] h-full">
        <svg width={18} height={10} viewBox="0 0 18 10" className="mr-[26px]"><path d="M1 9L9 1L17 9" fill="none" stroke="#ddd" strokeWidth="1.2" /></svg>
        <svg width={25} height={16} viewBox="0 0 25 16" className="mr-[24px]">
          <path d="M3 16Q-2 9 6 8Q9 1 14 1Q19 2 20 8Q27 9 24 16Z" fill="#a9a9a9" />
          <path d="M3 16Q0 12 5 11L13 8L24 16Z" fill="#eee" />
        </svg>
        <svg width={24} height={20} viewBox="0 0 24 20" className="mr-[27px]">
          <rect x="6" y="5" width="17" height="14" fill="none" stroke="#eee" strokeWidth="1.2" />
          <rect x="9" y="7" width="12" height="10" fill="#eee" />
          <path d="M1 0V3M6 0V3M0 3H7V7L4 10V14" fill="none" stroke="#eee" strokeWidth="1.4" />
        </svg>
        <svg width={20} height={20} viewBox="0 0 20 20" className="mr-[25px]">
          <path d="M1 20Q3 8 18 1M6 20Q8 12 18 7M11 20Q12 15 18 13" fill="none" stroke="#ddd" strokeWidth="1.1" />
          <rect x="15" y="16" width="3" height="3" fill="#eee" />
        </svg>
        <svg width={24} height={20} viewBox="0 0 24 20" className="mr-[21px]">
          <path d="M1 7H5L10 2V18L5 13H1Z" fill="none" stroke="#ddd" strokeWidth="1.1" />
          <path d="M13 7Q15 10 13 13M16 4Q20 10 16 16M19 1Q25 10 19 19" fill="none" stroke="#ddd" strokeWidth="1.1" />
        </svg>
        <span className="text-[17px] w-[36px] text-center">ENG</span>
        <div className="w-[96px] ml-[18px] text-center text-[17px] leading-[28px]">
          <div>16:11</div>
          <div className="whitespace-nowrap">14/11/2020</div>
        </div>
        <svg width={25} height={26} viewBox="0 0 25 26" className="ml-[26px] mr-[37px]">
          <path d="M0 0H25V19H20V25L10 19H0Z" fill="#fff" />
          <path d="M5 6H20M5 10H20M5 14H15" stroke="#333" strokeWidth="1.2" />
          <circle cx="19" cy="20" r="5" fill="#1a1a1a" stroke="#fff" />
        </svg>
      </div>
      <div className="absolute right-[7px] top-0 w-[2px] h-[60px] bg-[#555]" />
    </div>
  );
}

export default function App() {
  return (
    <div className="w-[1920px] h-[1080px] overflow-hidden flex flex-col bg-white">
      <TitleBar />
      <TabBar />
      <Ribbon />
      <Canvas />
      <Timeline />
      <Taskbar />
    </div>
  );
}
